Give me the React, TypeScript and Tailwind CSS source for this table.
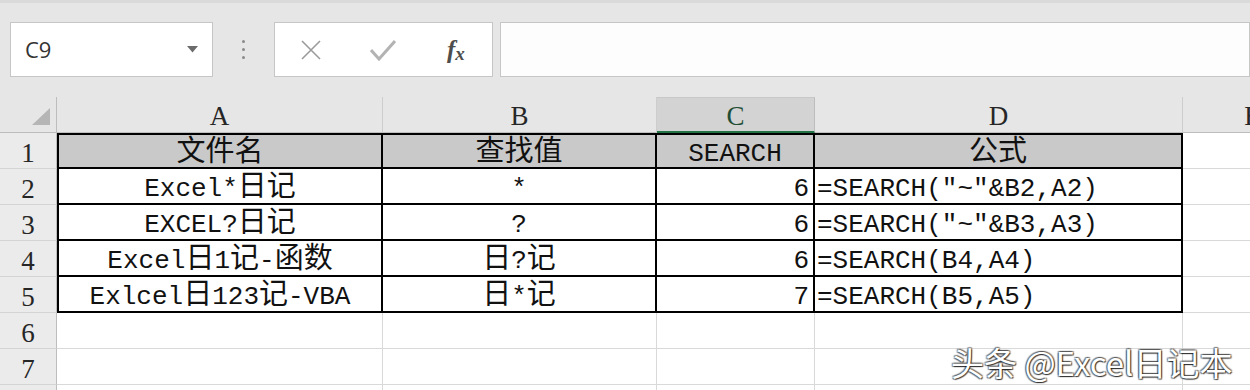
import React from 'react';

const COLS = ['A', 'B', 'C', 'D', 'E'];

interface RowData {
  a: string;
  b: string;
  c: string;
  d: string;
}

const rows: RowData[] = [
  { a: '文件名', b: '查找值', c: 'SEARCH', d: '公式' },
  { a: 'Excel*日记', b: '*', c: '6', d: '=SEARCH("~"&B2,A2)' },
  { a: 'EXCEL?日记', b: '?', c: '6', d: '=SEARCH("~"&B3,A3)' },
  { a: 'Excel日1记-函数', b: '日?记', c: '6', d: '=SEARCH(B4,A4)' },
  { a: 'Exlcel日123记-VBA', b: '日*记', c: '7', d: '=SEARCH(B5,A5)' },
];

const cellFont = "font-['Liberation_Mono','Noto_Sans_CJK_SC',monospace]";

// CJK runs render a little larger than the half-width latin glyphs
const Txt: React.FC<{ s: string }> = ({ s }) => (
  <>
    {s.split(/([\u4e00-\u9fff]+)/).map((p, i) =>
      /[\u4e00-\u9fff]/.test(p) ? (
        <span key={i} className="text-[29px]">
          {p}
        </span>
      ) : (
        <React.Fragment key={i}>{p}</React.Fragment>
      )
    )}
  </>
);

const RowHead: React.FC<{ n: number }> = ({ n }) => (
  <div className="flex items-center justify-center overflow-hidden border-r border-b border-r-[#bdbdbd] border-b-[#d4d4d4] bg-[#ebebeb] pt-[4px] font-['Liberation_Serif',serif] text-[27px] text-[#262626]">
    {n}
  </div>
);

const Toolbar: React.FC = () => (
  <div className="flex h-[97px] items-start border-t-[3px] border-[#dadada] bg-[#e6e6e6] pt-[19px] pl-[10px]">
    {/* name box */}
    <div className="flex h-[55px] w-[203px] items-center justify-between border border-[#c6c6c6] bg-white pl-[14px] pr-[14px]">
      <span className="font-['Open_Sans',sans-serif] text-[22px] text-[#333]">C9</span>
      <svg width="11" height="7" viewBox="0 0 11 7">
        <path d="M0 0h11L5.5 6.5z" fill="#6b6b6b" />
      </svg>
    </div>
    <div className="flex h-[55px] w-[61px] flex-col items-center justify-center gap-[5px]">
      <span className="h-[3px] w-[3px] rounded-full bg-[#8a8a8a]" />
      <span className="h-[3px] w-[3px] rounded-full bg-[#8a8a8a]" />
      <span className="h-[3px] w-[3px] rounded-full bg-[#8a8a8a]" />
    </div>
    {/* cancel / enter / insert function */}
    <div className="flex h-[55px] w-[219px] items-center border border-[#c6c6c6] bg-white">
      <div className="flex w-[73px] justify-center">
        <svg width="22" height="20" viewBox="0 0 22 20">
          <path d="M2 1l18 18M20 1L2 19" stroke="#9b9b9b" strokeWidth="1.6" fill="none" />
        </svg>
      </div>
      <div className="flex w-[73px] justify-center">
        <svg width="26" height="22" viewBox="0 0 26 22">
          <path d="M1 11l8 9L25 2" stroke="#b3b3b3" strokeWidth="3" fill="none" />
        </svg>
      </div>
      <div className="flex w-[73px] justify-center">
        <span className="font-['Liberation_Serif',serif] text-[25px] leading-none font-bold italic text-[#4d4d4d]">
          f<span className="relative top-[2px] text-[19px]">x</span>
        </span>
      </div>
    </div>
    {/* formula input */}
    <div className="ml-[7px] h-[55px] flex-1 border border-[#c6c6c6] bg-[#fdfdfe]" />
  </div>
);

export default function App() {
  const grid = 'grid h-[36px] grid-cols-[57px_326px_274px_158px_368px_140px] grid-rows-[36px]';

  return (
    <div className="relative h-[390px] w-[1250px] overflow-hidden bg-white">
      <Toolbar />

      <div className={`${cellFont} text-[26px] leading-[30px] text-[#111]`}>
        {/* column headers */}
        <div className={`${grid} bg-[#e6e6e6]`}>
          <div className="relative border-r border-b border-[#bdbdbd] bg-[#e6e6e6]">
            <svg className="absolute left-[32px] top-[11px]" width="18" height="17" viewBox="0 0 18 17">
              <path d="M18 0v17H0z" fill="#b5b5b5" />
            </svg>
          </div>
          {COLS.map((c) =>
            c === 'C' ? (
              <div
                key={c}
                className="flex items-center justify-center border-t border-r border-b-2 border-t-[#c8c8c8] border-r-[#bdbdbd] border-b-[#217346] bg-[#d3d3d3] pt-[3px] font-['Liberation_Serif',serif] text-[27px] text-[#1f4e36]"
              >
                {c}
              </div>
            ) : (
              <div
                key={c}
                className="flex items-center justify-center overflow-hidden border-r border-b border-r-[#cdcdcd] border-b-[#bdbdbd] pt-[3px] font-['Liberation_Serif',serif] text-[27px] text-[#262626]"
              >
                {c}
              </div>
            )
          )}
        </div>

        {/* data rows */}
        {rows.map((r, i) => {
          const head = i === 0;
          const top = head ? 'border-t-2' : '';
          const fill = head ? 'bg-[#c9c9c9]' : 'bg-white';
          return (
            <div key={i} className={grid}>
              <RowHead n={i + 1} />
              <div className={`flex items-center justify-center border-l-2 border-r-2 border-b-2 border-black ${top} ${fill} pt-[5px]`}>
                <Txt s={r.a} />
              </div>
              <div className={`flex items-center justify-center border-r-2 border-b-2 border-black ${top} ${fill} pt-[5px]`}>
                <Txt s={r.b} />
              </div>
              <div
                className={`flex items-center border-r-2 border-b-2 border-black ${top} ${fill} pt-[5px] ${
                  head ? 'justify-center' : 'justify-end pr-[4px]'
                }`}
              >
                <Txt s={r.c} />
              </div>
              <div
                className={`flex items-center border-r-2 border-b-2 border-black ${top} ${fill} pt-[5px] ${
                  head ? 'justify-center' : 'justify-start pl-[2px]'
                }`}
              >
                <Txt s={r.d} />
              </div>
              <div className="border-r border-b border-[#d9d9d9] bg-white" />
            </div>
          );
        })}

        {/* empty rows */}
        {[6, 7].map((n) => (
          <div key={n} className={grid}>
            <RowHead n={n} />
            {COLS.map((c) => (
              <div key={c} className="border-r border-b border-[#d9d9d9] bg-white" />
            ))}
          </div>
        ))}
        <div className={grid}>
          <div className="border-r border-[#bdbdbd] bg-[#ebebeb]" />
          {COLS.map((c) => (
            <div key={c} className="border-r border-[#d9d9d9] bg-white" />
          ))}
        </div>
      </div>

      {/* watermark */}
      <div className="absolute left-[951px] top-[346px] font-['Noto_Sans_CJK_SC',sans-serif] text-[33px] leading-none text-white [text-shadow:1px_1px_1px_rgba(0,0,0,0.7),-1px_-1px_1px_rgba(0,0,0,0.45),1px_-1px_1px_rgba(0,0,0,0.45),-1px_1px_1px_rgba(0,0,0,0.45)]">
        头条 @Excel日记本
      </div>
    </div>
  );
}
